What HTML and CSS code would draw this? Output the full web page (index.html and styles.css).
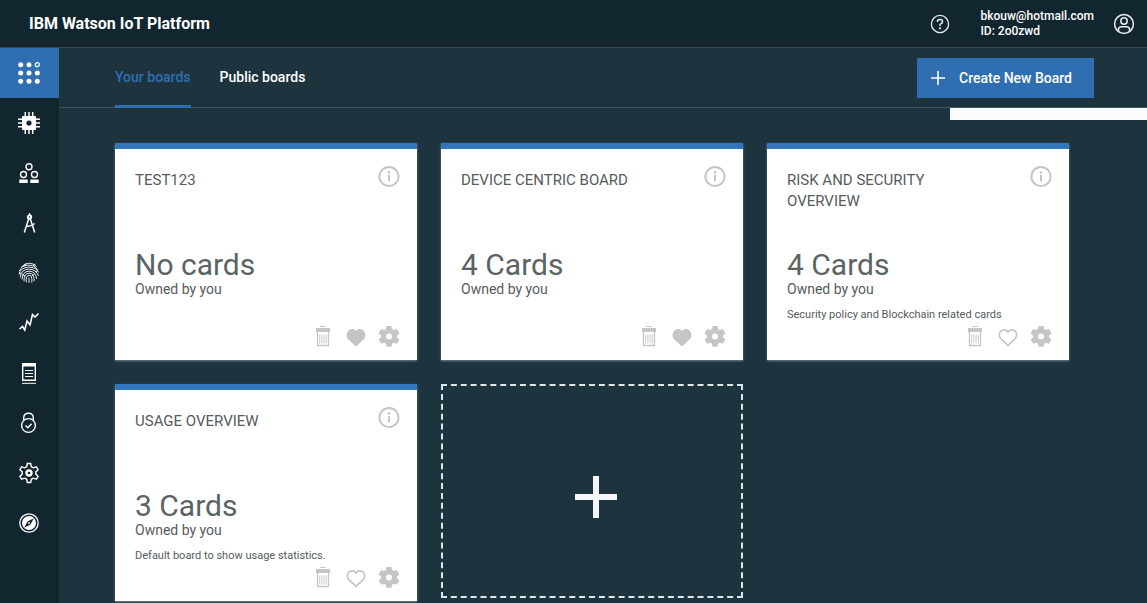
FILE: index.html
```html
<!DOCTYPE html>
<html lang="en">
<head>
<meta charset="utf-8">
<meta name="viewport" content="width=device-width, initial-scale=1">
<title>IBM Watson IoT Platform</title>
<link rel="stylesheet" href="styles.css">
</head>
<body>
<svg class="sprite" aria-hidden="true">
  <symbol id="info" viewBox="0 0 22 22"><circle cx="11" cy="10.500" r="9.600" fill="none" stroke="currentColor" stroke-width="2"/><circle cx="11" cy="6.500" r="1.300" fill="currentColor"/><path d="M10 9h2v6.500h-2z" fill="currentColor"/></symbol>
  <symbol id="trash" viewBox="0 0 22 22"><path d="M8 0h6v1h-6zM4 2h14v4H4z" fill="currentColor"/><path d="M5.500 6v13.500h11V6" fill="none" stroke="currentColor" stroke-width="1.300"/><path d="M7.700 8.500v9M9.900 8.500v9M12.100 8.500v9M14.300 8.500v9" stroke="currentColor" stroke-width=".9"/></symbol>
  <symbol id="heart-full" viewBox="0 0 22 22"><path d="M11 20.500L3.400 13.500C1 11 1 6.800 3.300 4.700C5.600 2.500 9.200 2.400 11 4.800C12.800 2.400 16.400 2.500 18.700 4.700C21 6.800 21 11 18.600 13.500z" fill="currentColor"/></symbol>
  <symbol id="heart" viewBox="0 0 22 22"><path d="M11 19.300L4 12.800C1.700 10.500 1.700 7.200 3.900 5.200C6.100 3.200 9.500 3.500 11 6.100C12.500 3.500 15.900 3.200 18.100 5.200C20.300 7.200 20.300 10.500 18 12.800z" fill="none" stroke="currentColor" stroke-width="1.700"/></symbol>
  <symbol id="gear" viewBox="0 0 22 22"><path fill="currentColor" fill-rule="evenodd" d="M8.500 0h5l.6 3.100 1.800 1 3-1 2.500 4.300-2.400 2v2l2.400 2-2.500 4.300-3-1-1.800 1-.6 3.100h-5l-.6-3.100-1.800-1-3 1L.6 13.400l2.400-2v-2l-2.400-2 2.500-4.300 3 1 1.800-1zM11 7.400a3 3 0 1 0 0 6 3 3 0 0 0 0-6z"/></symbol>
</svg>

<header class="topbar">
  <h1 class="brand">IBM Watson IoT Platform</h1>
  <button class="icon-btn" aria-label="Help"><svg class="ico-help" viewBox="0 0 20 20" fill="none" stroke="currentColor" stroke-width="1.300"><circle cx="10" cy="10" r="8.600"/><path d="M7.500 8V7.300Q7.500 5.600 10 5.600T12.500 7.700Q12.500 9.200 11 9.600Q10 9.900 10 11V12" stroke-width="1.500"/><circle cx="10" cy="14.300" r=".5"/></svg></button>
  <div class="account"><div>bkouw@hotmail.com</div><div>ID: 2o0zwd</div></div>
  <button class="icon-btn" aria-label="Profile"><svg class="ico-user" viewBox="0 0 22 22" fill="none" stroke="currentColor" stroke-width="1.500"><circle cx="11" cy="11" r="9.400"/><circle cx="11" cy="8" r="3.200"/><path d="M5.500 18V16.500Q5.500 13.700 8.300 13.700H13.700Q16.500 13.700 16.500 16.500V18"/></svg></button>
</header>

<div class="shell">
  <nav class="sidebar" aria-label="Main">
    <a class="side-link active" href="#" aria-label="Boards"><svg viewBox="0 0 22 22" fill="currentColor"><circle cx="2.700" cy="2.700" r="2.500"/><circle cx="11" cy="2.700" r="2.500"/><circle cx="19.300" cy="2.700" r="2" fill="none" stroke="currentColor" stroke-width="1.200"/><circle cx="2.700" cy="11" r="2.500"/><circle cx="11" cy="11" r="2.500"/><circle cx="19.300" cy="11" r="2.500"/><circle cx="2.700" cy="19.300" r="2.500"/><circle cx="11" cy="19.300" r="2.500"/><circle cx="19.300" cy="19.300" r="2.500"/></svg></a>
    <a class="side-link" href="#" aria-label="Devices"><svg viewBox="0 0 22 22"><path d="M7.300 0v22M11 0v22M14.700 0v22M0 7.300h22M0 11h22M0 14.700h22" stroke="currentColor" stroke-width="1.500"/><rect x="4" y="4" width="14" height="14" rx="1" fill="currentColor"/><circle class="hole" cx="11" cy="11" r="2.600"/></svg></a>
    <a class="side-link" href="#" aria-label="Members"><svg viewBox="0 0 22 22" fill="none" stroke="currentColor" stroke-width="1.400"><circle cx="11" cy="4.700" r="3"/><circle cx="5.500" cy="12.500" r="3"/><circle cx="16.500" cy="12.500" r="3"/><path d="M1.300 17.500h8.400v3.500H1.300zM12.300 17.500h8.400v3.500h-8.400z" fill="currentColor" stroke="none"/></svg></a>
    <a class="side-link" href="#" aria-label="Apps"><svg viewBox="0 0 22 22" fill="none" stroke="currentColor" stroke-width="1.500"><path d="M11.500 1v3" stroke-width="1.200"/><circle cx="11.500" cy="5" r="1.700" stroke-width="1.900"/><path d="M10.800 6.500L6.300 20.500M12.200 6.500L16.700 20.500M7.800 14Q12 15.300 16.700 11.500"/></svg></a>
    <a class="side-link" href="#" aria-label="Access Management"><svg viewBox="0 0 22 22" fill="none" stroke="currentColor" stroke-width=".9"><path d="M3 5.500Q6.500 1.200 11 1.200T18.500 4.500M1.500 9Q3.500 3.400 10 3.200T19.600 7.500M1 12.500Q2.600 5.400 10.500 5.200T20.600 10.500M2.200 15.500Q3 7.500 10.500 7.200T20.500 14M4 17.500Q4.500 9.400 11 9.200T18.700 17M6 19.200Q5.800 11.500 11 11.200T16.200 19.200M8.300 20.500Q7.500 13.500 11 13.300T13.800 20.600M11 15.500v5.300M2.500 12l-1-2M15 3.500l2.500-1.500M6 4.500L8 1.500M17 10l3-1.500M4 12l3 2M13.500 14l3-2"/></svg></a>
    <a class="side-link" href="#" aria-label="Usage"><svg viewBox="0 0 22 22" fill="none" stroke="currentColor" stroke-width="1.600"><path d="M1.500 17L4.500 14.500L6.700 18L9 9L12 13L14.500 2.500L17 5L20.500 1.500"/></svg></a>
    <a class="side-link" href="#" aria-label="Logs"><svg viewBox="0 0 22 22" fill="none" stroke="currentColor"><path d="M4.700 2.500h12.600v15.800H4.700z" stroke-width="1.400"/><path d="M4 1h14v3.500H4z" fill="currentColor" stroke="none"/><path d="M7 8.500h8M7 11.500h8M7 14.500h8M4 21.300h14"/></svg></a>
    <a class="side-link" href="#" aria-label="Security"><svg viewBox="0 0 22 22" fill="none" stroke="currentColor" stroke-width="1.400"><circle cx="10.500" cy="13.500" r="6.900"/><path d="M5.700 8.500V6Q5.700 1.200 10.500 1.200T15.300 6V8.500M7.500 13.500l2.300 2.300 3.800-4"/></svg></a>
    <a class="side-link" href="#" aria-label="Settings"><svg viewBox="0 0 22 22" fill="none" stroke="currentColor" stroke-width="1.400"><path d="M9.300 1.500h3.400l.6 3.200 2 1.100 3.100-1 1.700 2.900-2.300 2.200v2.200l2.300 2.200-1.700 2.900-3.100-1-2 1.100-.6 3.200H9.300l-.6-3.200-2-1.100-3.100 1-1.700-2.900 2.300-2.200V9.900L1.900 7.700l1.700-2.900 3.100 1 2-1.100z"/><circle cx="11" cy="11" r="2.500" stroke-width="2.400"/></svg></a>
    <a class="side-link" href="#" aria-label="Explore"><svg viewBox="0 0 22 22"><circle cx="11" cy="11" r="9.200" fill="none" stroke="currentColor" stroke-width="1.300"/><circle cx="11" cy="11" r="7" fill="currentColor"/><path class="hole" d="M15.800 6.200L12.500 12.500L6.200 15.800L9.500 9.500z"/><circle cx="11" cy="11" r=".9" fill="currentColor"/></svg></a>
  </nav>

  <main class="main">
    <div class="tabbar">
      <nav class="tabs" aria-label="Boards">
        <a class="tab active" href="#">Your boards</a>
        <a class="tab" href="#">Public boards</a>
      </nav>
      <button class="create"><svg viewBox="0 0 14 14" stroke="currentColor" stroke-width="1.600"><path d="M7 0v14M0 7h14"/></svg>Create New Board</button>
      <div class="notice" role="status"></div>
    </div>

    <section class="boards">
      <article class="card">
        <div class="card-head"><h2>TEST123</h2><button class="card-btn" aria-label="Information"><svg><use href="#info"/></svg></button></div>
        <div class="count">No cards</div>
        <div class="owner">Owned by you</div>
        <p class="desc"></p>
        <div class="actions"><button class="card-btn" aria-label="Delete"><svg><use href="#trash"/></svg></button><button class="card-btn" aria-label="Unfavorite"><svg><use href="#heart-full"/></svg></button><button class="card-btn" aria-label="Settings"><svg><use href="#gear"/></svg></button></div>
      </article>
      <article class="card">
        <div class="card-head"><h2>DEVICE CENTRIC BOARD</h2><button class="card-btn" aria-label="Information"><svg><use href="#info"/></svg></button></div>
        <div class="count">4 Cards</div>
        <div class="owner">Owned by you</div>
        <p class="desc"></p>
        <div class="actions"><button class="card-btn" aria-label="Delete"><svg><use href="#trash"/></svg></button><button class="card-btn" aria-label="Unfavorite"><svg><use href="#heart-full"/></svg></button><button class="card-btn" aria-label="Settings"><svg><use href="#gear"/></svg></button></div>
      </article>
      <article class="card">
        <div class="card-head"><h2>RISK AND SECURITY OVERVIEW</h2><button class="card-btn" aria-label="Information"><svg><use href="#info"/></svg></button></div>
        <div class="count">4 Cards</div>
        <div class="owner">Owned by you</div>
        <p class="desc">Security policy and Blockchain related cards</p>
        <div class="actions"><button class="card-btn" aria-label="Delete"><svg><use href="#trash"/></svg></button><button class="card-btn" aria-label="Favorite"><svg><use href="#heart"/></svg></button><button class="card-btn" aria-label="Settings"><svg><use href="#gear"/></svg></button></div>
      </article>
      <article class="card">
        <div class="card-head"><h2>USAGE OVERVIEW</h2><button class="card-btn" aria-label="Information"><svg><use href="#info"/></svg></button></div>
        <div class="count">3 Cards</div>
        <div class="owner">Owned by you</div>
        <p class="desc">Default board to show usage statistics.</p>
        <div class="actions"><button class="card-btn" aria-label="Delete"><svg><use href="#trash"/></svg></button><button class="card-btn" aria-label="Favorite"><svg><use href="#heart"/></svg></button><button class="card-btn" aria-label="Settings"><svg><use href="#gear"/></svg></button></div>
      </article>
      <button class="add" aria-label="Add board"><svg viewBox="0 0 42 42" stroke="currentColor" stroke-width="6"><path d="M21 0v42M0 21h42"/></svg></button>
    </section>
  </main>
</div>
</body>
</html>
```
FILE: styles.css
```css
* { box-sizing: border-box; }
body {
  margin: 0;
  min-height: 100vh;
  display: flex;
  flex-direction: column;
  background: #1d343f;
  color: #fff;
  font-family: Roboto, "Liberation Sans", sans-serif;
  font-size: 14px;
}
h1, h2, p { margin: 0; font-weight: 400; }
button { border: 0; padding: 0; background: none; color: inherit; font: inherit; cursor: pointer; }
a { color: inherit; text-decoration: none; }
svg { display: block; }
.sprite { position: absolute; width: 0; height: 0; }

.topbar {
  display: flex;
  align-items: center;
  height: 48px;
  padding: 0 12px 0 29px;
  background: #122630;
  border-bottom: 1px solid #3c484c;
}
.brand { margin-right: auto; font-size: 16px; font-weight: 700; }
.icon-btn { color: #e8edef; }
.ico-help { width: 20px; height: 20px; }
.ico-user { width: 22px; height: 22px; }
.account {
  margin: 0 19px 0 30px;
  font-size: 12px;
  font-weight: 500;
  line-height: 15px;
}

.shell { flex: 1; display: flex; }
.sidebar { flex: none; width: 59px; background: #122630; }
.side-link {
  display: flex;
  align-items: center;
  justify-content: center;
  height: 50px;
  padding-right: 2px;
}
.side-link svg { width: 22px; height: 22px; }
.side-link.active { background: #2f6fb1; }
.hole { fill: #122630; }

.main { flex: 1; min-width: 0; }
.tabbar {
  position: relative;
  display: flex;
  align-items: center;
  justify-content: space-between;
  height: 60px;
  padding: 0 53px 0 56px;
  border-bottom: 1px solid #40525c;
}
.tabs { display: flex; gap: 29px; align-self: stretch; }
.tab {
  height: 60px;
  border-bottom: 3px solid transparent;
  font-weight: 500;
  line-height: 58px;
}
.tab.active { color: #2f6fb1; border-color: #2f6fb1; }
.create {
  display: flex;
  align-items: center;
  gap: 14px;
  height: 40px;
  padding: 0 22px 0 14px;
  background: #2f6fb1;
  font-weight: 500;
}
.create svg { width: 14px; height: 14px; }
.notice {
  position: absolute;
  top: 60px;
  right: 0;
  width: 197px;
  height: 12px;
  background: #fbfcfc;
}

.boards {
  display: grid;
  grid-template-columns: repeat(auto-fill, minmax(280px, 1fr));
  gap: 24px;
  padding: 35px 78px 2px 56px;
}
.card {
  padding: 17px 17px 12px 20px;
  background: #fff;
  border-top: 6px solid #3277bd;
  box-shadow: 0 1px 2px #7b8589;
  color: #565b5e;
}
.card-head {
  display: flex;
  align-items: flex-start;
  justify-content: space-between;
  gap: 40px;
  min-height: 83px;
}
.card-head h2 { padding-top: 4px; font-size: 15px; line-height: 21px; }
.card-btn { flex: none; color: #c5c5c5; }
.card-btn svg { width: 22px; height: 22px; }
.count { font-size: 30px; line-height: 31px; color: #5a6464; }
.owner { line-height: 18px; }
.desc { min-height: 25px; padding-top: 9px; font-size: 11px; line-height: 16px; }
.actions { display: flex; justify-content: flex-end; gap: 11px; padding-top: 3px; }

.add {
  display: grid;
  place-items: center;
  margin-bottom: 3px;
  padding: 11px 0 0 8px;
  border: 2px dashed #dfe8e9;
  color: #f4f5f8;
}
.add svg { width: 42px; height: 42px; }
```
